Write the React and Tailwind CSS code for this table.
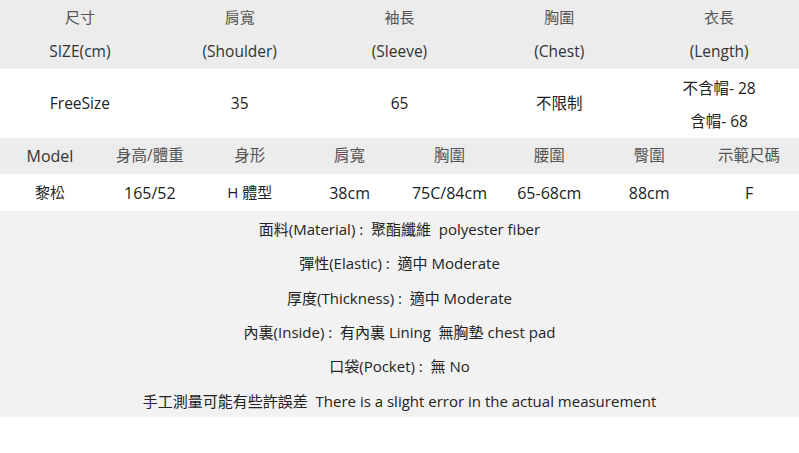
import React from 'react';

const sizeHead = [
  ['尺寸', 'SIZE(cm)'],
  ['肩寬', '(Shoulder)'],
  ['袖長', '(Sleeve)'],
  ['胸圍', '(Chest)'],
  ['衣長', '(Length)'],
];

const modelHead = ['Model', '身高/體重', '身形', '肩寬', '胸圍', '腰圍', '臀圍', '示範尺碼'];
const modelRow = ['黎松', '165/52', 'H 體型', '38cm', '75C/84cm', '65-68cm', '88cm', 'F'];

const notes = [
  '面料(Material) :  聚酯纖維  polyester fiber',
  '彈性(Elastic) :  適中 Moderate',
  '厚度(Thickness) :  適中 Moderate',
  '內裏(Inside) :  有內裏 Lining  無胸墊 chest pad',
  '口袋(Pocket) :  無 No',
  '手工測量可能有些許誤差  There is a slight error in the actual measurement',
];

const font = { fontFamily: '"Segoe UI", "Open Sans", "Noto Sans CJK TC", sans-serif' };

export default function App() {
  return (
    <div className="w-[799px] h-[453px] bg-white text-[#222] text-[15.5px]" style={font}>
      {/* size table */}
      <div className="grid grid-cols-5 h-[69px] bg-[#ececec]">
        {sizeHead.map(([zh, en]) => (
          <div key={en} className="flex flex-col items-center">
            <div className="h-[34px] leading-[34px] text-[15px] text-[#555]">{zh}</div>
            <div className="h-[35px] leading-[35px] text-[#333]">{en}</div>
          </div>
        ))}
      </div>
      <div className="grid grid-cols-5 h-[69px] items-center text-center">
        <div>FreeSize</div>
        <div>35</div>
        <div>65</div>
        <div>不限制</div>
        <div className="flex flex-col items-center">
          <div className="h-[34px] leading-[38px]">不含帽- 28</div>
          <div className="h-[35px] leading-[36px]">含帽- 68</div>
        </div>
      </div>

      {/* model table */}
      <div className="grid grid-cols-8 h-[36px] items-center text-center bg-[#ececec]">
        {modelHead.map((h, i) => (
          <div key={h + i} className={i === 0 ? 'text-[16px] text-[#333]' : 'text-[15.5px] text-[#555]'}>{h}</div>
        ))}
      </div>
      <div className="grid grid-cols-8 h-[37px] items-center text-center text-[16px]">
        {modelRow.map((v, i) => (
          <div key={v + i} className={i === 0 || i === 2 ? 'text-[15px]' : ''}>{v}</div>
        ))}
      </div>

      {/* notes */}
      <div className="flex flex-col bg-[#f2f2f2] h-[206px] text-[15px] text-[#222]">
        {notes.map((n) => (
          <div key={n} className="h-[34.33px] leading-[36px] text-center whitespace-pre">{n}</div>
        ))}
      </div>
    </div>
  );
}
